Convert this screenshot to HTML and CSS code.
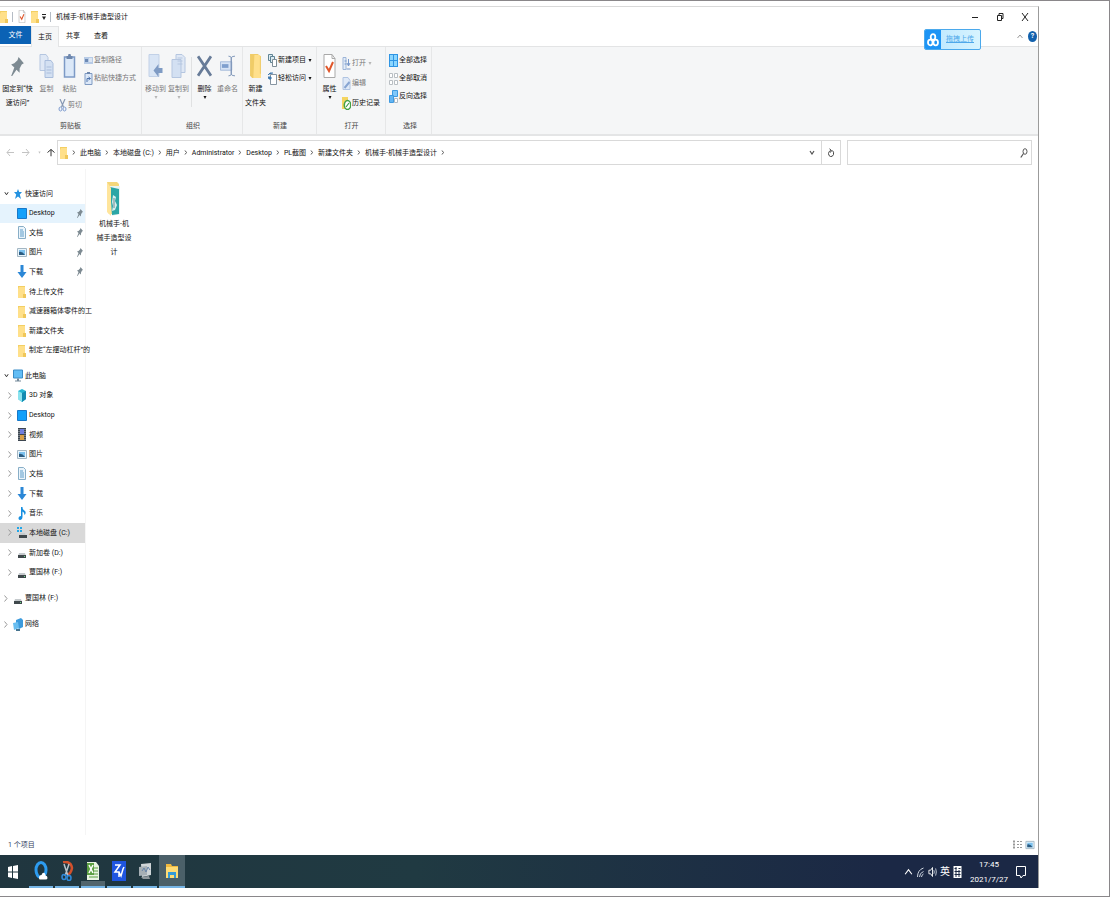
FILE: index.html
```html
<!DOCTYPE html>
<html lang="zh-CN">
<head>
  <meta charset="UTF-8" />
  <meta name="viewport" content="width=device-width, initial-scale=1.0"/>
  <title>机械手-机械手造型设计</title>
  <link rel="stylesheet" href="styles.css">
</head>
<body>
  <!-- icon sprite -->
  <svg class="sprite" aria-hidden="true">
    <symbol id="i-folder" viewBox="0 0 8 13"><path d="M0 1h7v12H0z" fill="#f3cf63"/><path d="M1 2h6v11H0V4z" fill="#ffe08a"/><path d="M5 9h3v4H5z" fill="#f0c75a"/></symbol>
    <symbol id="i-check" viewBox="0 0 12 24"><path d="M.5.5h8l3 4v19H.5z" fill="#fff" stroke="#a9a9a9"/><path d="M8.500.5v4h3" fill="none" stroke="#a9a9a9"/><path d="M2.500 12l3 5 4-9" fill="none" stroke="#e0572b" stroke-width="2"/></symbol>
    <symbol id="i-pin" viewBox="0 0 12 18"><path d="M7 0l5 6-2 1-2 4v4l-3-3-4 6-1 0 3-8-3-3 3-1 3-3z" fill="#7d8a92"/></symbol>
    <symbol id="i-copy" viewBox="0 0 14 24"><path d="M.5.5h6l2 3v13h-8z" fill="#dfe8f5" stroke="#b5c6e0"/><path d="M5.500 6.500h6l2 3v14h-8z" fill="#d3e0f2" stroke="#a9bddc"/><path d="M7 13h5M7 16h5M7 19h5" stroke="#a9bddc"/></symbol>
    <symbol id="i-paste" viewBox="0 0 12 24"><path d="M1 3h10v20H1z" fill="#dbe8f8" stroke="#7d9ac6" stroke-width="1.500"/><path d="M3 2h1.500L5 0h2l.5 2H9v3H3z" fill="#6e87ad"/></symbol>
    <symbol id="i-path" viewBox="0 0 9 9"><path d="M0 1h9v7H0z" fill="#b7cbe6"/><path d="M1 3h3v3H1z" fill="#6c89b4"/><path d="M5 3h3M5 5h3" stroke="#fff"/></symbol>
    <symbol id="i-shortcut" viewBox="0 0 8 13"><path d="M.5 1.500h7v11h-7z" fill="#dce8f8" stroke="#7f9ac2"/><path d="M2.500 0h3v2h-3z" fill="#6e87ad"/><path d="M2.500 10V6.500h3M4 5l2 1.500L4 8" fill="none" stroke="#4f74ad"/></symbol>
    <symbol id="i-cut" viewBox="0 0 8 13"><path d="M1.500 0L5 8M6.500 0L3 8" stroke="#8798b3" fill="none" stroke-width="1.200"/><ellipse cx="2" cy="10" rx="1.500" ry="2" fill="none" stroke="#7d9bd0"/><ellipse cx="6" cy="10" rx="1.500" ry="2" fill="none" stroke="#7d9bd0"/></symbol>
    <symbol id="i-moveto" viewBox="0 0 14 24"><path d="M.5.5h10v22H.5z" fill="#d9e5f5" stroke="#c2d1e7"/><path d="M14 14v5h-4v4l-5-6.500 5-6.500v4z" fill="#7f9bc4"/></symbol>
    <symbol id="i-copyto" viewBox="0 0 14 24"><path d="M4.500.5h6l3 3v15h-9z" fill="#dfe8f5" stroke="#b5c6e0"/><path d="M.5 5.500h9v18h-9z" fill="#d3e0f2" stroke="#b5c6e0"/><path d="M6 4h5M6 7h5M6 10h5" stroke="#b5c6e0"/></symbol>
    <symbol id="i-delete" viewBox="0 0 14 20"><path d="M1 1l12 18M13 1L1 19" stroke="#677b98" stroke-width="2.500"/></symbol>
    <symbol id="i-rename" viewBox="0 0 16 22"><path d="M.5 6.500h12v9H.5z" fill="#d6e3f5" stroke="#a3b9da"/><path d="M2 9h7v4H2z" fill="#7f9fce"/><path d="M9 .5q3 0 3 2v17q0 2-3 2M16 .5q-4 0-4 2v17q0 2 4 2" fill="none" stroke="#7d94b8"/></symbol>
    <symbol id="i-bigfolder" viewBox="0 0 12 22"><path d="M1 0h7l3 2v20H3L1 20z" fill="#f0cc68"/><path d="M5 1h5v17h1v4H4z" fill="#ffe08c"/></symbol>
    <symbol id="i-newitem" viewBox="0 0 9 13"><path d="M.5.5h4v6h-4z" fill="#dcebf2" stroke="#5f8494"/><path d="M2.500 2.500h4v6h-4z" fill="#dcebf2" stroke="#5f8494"/><path d="M4.500 5.500h4v7h-4z" fill="#fff" stroke="#7e8d96"/></symbol>
    <symbol id="i-access" viewBox="0 0 9 13"><path d="M2.500 2.500h6v10h-6z" fill="#fff" stroke="#8795a1"/><path d="M0 3l2-2h3M0 5h3v2H1z" stroke="#3e79ad" fill="#3e79ad"/></symbol>
    <symbol id="i-open" viewBox="0 0 8 13"><path d="M.5.5h3v12h-3z" fill="#e4edf8" stroke="#9db5d8"/><path d="M2 4h2M2 7h2" stroke="#7898cb"/><path d="M6 2v7M4.500 6L6 9l1.500-3M4 12h4" fill="none" stroke="#7898cb"/></symbol>
    <symbol id="i-edit" viewBox="0 0 8 13"><path d="M.5.5h5l2 3v9h-7z" fill="#dfe9f7" stroke="#b0c4e2"/><path d="M2 11l5-6" stroke="#88a5d2" stroke-width="2"/></symbol>
    <symbol id="i-history" viewBox="0 0 9 13"><path d="M0 0h6v12H0z" fill="#f5d561"/><ellipse cx="5.500" cy="8" rx="3.200" ry="4.500" fill="#fff" stroke="#43a047" stroke-width="1.500"/><path d="M4 10l3-4" stroke="#43a047" stroke-width="1.200"/></symbol>
    <symbol id="i-all" viewBox="0 0 9 13"><path d="M0 0h9v13H0z" fill="#2f95e4"/><path d="M1 1h3v5H1zM5 1h3v5H5zM1 7h3v5H1zM5 7h3v5H5z" fill="#8bd6ff"/></symbol>
    <symbol id="i-none" viewBox="0 0 9 13"><path d="M.5 1.500h3v4h-3zM5.500 1.500h3v4h-3zM.5 8.500h3v4h-3zM5.500 8.500h3v4h-3z" fill="#fff" stroke="#b9bec3"/></symbol>
    <symbol id="i-invert" viewBox="0 0 9 13"><path d="M3.500.5h5v6h-5z" fill="#7fc8fa" stroke="#3f9ae0"/><path d="M.5 5.500h4v7h-4z" fill="#62b5f3" stroke="#3f9ae0"/><path d="M5.500 8.500h3v4h-3z" fill="#fff" stroke="#b0bac4"/></symbol>
    <symbol id="i-star" viewBox="0 0 10 13"><path d="M5 2l1.200 3H9L6.800 7.500 8 12 5 9.500 2 12l1.200-4.500L1 5h2.800z" fill="#2492e0"/></symbol>
    <symbol id="i-desktop" viewBox="0 0 10 11"><path d="M.5.5h9v10h-9z" fill="#12a0fa" stroke="#1878c8"/></symbol>
    <symbol id="i-doc" viewBox="0 0 10 13"><path d="M1.500.5h5l2 2v10h-7z" fill="#eaf4fb" stroke="#88aec7"/><path d="M3 4h3M3 6h4M3 8h4M3 10h4" stroke="#5c9cc9"/></symbol>
    <symbol id="i-pic" viewBox="0 0 10 11"><path d="M.5 1.500h9v8h-9z" fill="#e8f4fb" stroke="#a3b6c3"/><path d="M2 3h6v5H2z" fill="#7cc1ee"/><path d="M2 5q3-1 6 3H2z" fill="#2b5b80"/></symbol>
    <symbol id="i-down" viewBox="0 0 10 13"><path d="M3.500 0h3v7H9.500L5 13 .5 7h3z" fill="#2b87d6"/></symbol>
    <symbol id="i-pc" viewBox="0 0 10 12"><path d="M.5.5h9v8h-9z" fill="#62bdf5" stroke="#3a8cc6"/><path d="M4 9h2v2H4zM2 11h6v1H2z" fill="#74899a"/></symbol>
    <symbol id="i-3d" viewBox="0 0 10 13"><path d="M1 2l4-2 4 2v8l-4 3-4-3z" fill="#24b6d2"/><path d="M1 2l4 2v9l-4-3z" fill="#8be3ee"/><path d="M5 4l4-2v8l-4 3z" fill="#138bb0"/></symbol>
    <symbol id="i-video" viewBox="0 0 10 13"><path d="M1 0h8v13H1z" fill="#3d4650"/><path d="M3 1h4v5H3z" fill="#6f7ee0"/><path d="M3 7h4v5H3z" fill="#d8a048"/><path d="M2 1v11M8 1v11" stroke="#aeb6bd" stroke-dasharray="1 1"/></symbol>
    <symbol id="i-music" viewBox="0 0 10 13"><path d="M4 0h1.500q0 3 2.500 4 1.500 2-.5 4 0-3-2-3.500V10q0 2.500-2 3-2 0-2-1.500Q1.500 9 4 9z" fill="#178fe0"/></symbol>
    <symbol id="i-drive" viewBox="0 0 10 13"><path d="M2 7h6l1 3H1z" fill="#c5cacd"/><path d="M1 9h8v3H1z" fill="#40484c"/><path d="M7 10h1v1H7z" fill="#6fe08c"/></symbol>
    <symbol id="i-cdrive" viewBox="0 0 10 13"><path d="M0 1h2v2H0zM3 1h2v2H3zM0 4h2v2H0zM3 4h2v2H3z" fill="#22a7e8"/><path d="M3 7h5l1 3H2z" fill="#c5cacd"/><path d="M2 9h8v3H2z" fill="#40484c"/></symbol>
    <symbol id="i-net" viewBox="0 0 10 13"><path d="M3 2l5-2 2 2v7l-4 2-3-3z" fill="#3d9bdd"/><path d="M0 5l5-1 1 6-5 2z" fill="#68bdf0"/><path d="M3 11h4v2H3z" fill="#47748f"/></symbol>
    <symbol id="i-right" viewBox="0 0 4 7"><path d="M1 1.500l1.500 2L1 5.500" fill="none" stroke="currentColor"/></symbol>
    <symbol id="i-expand" viewBox="0 0 4 7"><path d="M.5.5l2.500 3-2.500 3" fill="none" stroke="currentColor"/></symbol>
    <symbol id="i-chevdown" viewBox="0 0 6 5"><path d="M1 1l2 3 2-3" fill="none" stroke="currentColor" stroke-width="1.200"/></symbol>
    <symbol id="i-caret" viewBox="0 0 4 3"><path d="M.5 0h3L2 3z" fill="currentColor"/></symbol>
    <symbol id="i-arrow" viewBox="0 0 8 9"><path d="M8 4.500H1M4 1L1 4.500 4 8" fill="none" stroke="currentColor"/></symbol>
  </svg>

  <div class="frame">
    <div class="window">
      <header class="titlebar">
        <svg class="icon-folder"><use href="#i-folder"/></svg>
        <span class="bar"></span>
        <svg class="icon-check-sm"><use href="#i-check"/></svg>
        <svg class="icon-folder"><use href="#i-folder"/></svg>
        <button class="quick-menu" aria-label="自定义快速访问工具栏"><svg viewBox="0 0 4 6"><path d="M0 .5h4" stroke="#222"/><path d="M0 2.500h4L2 6z" fill="#222"/></svg></button>
        <span class="bar"></span>
        <h1>机械手-机械手造型设计</h1>
        <div class="window-buttons">
          <button aria-label="最小化"><svg viewBox="0 0 10 10"><path d="M2 5.500h6" stroke="#222"/></svg></button>
          <button aria-label="还原"><svg viewBox="0 0 10 10"><path d="M2.500 3.500h4v5h-4zM4 3V1.500h4v5H7" fill="none" stroke="#222"/></svg></button>
          <button aria-label="关闭"><svg viewBox="0 0 10 10"><path d="M2 1l6 8M8 1L2 9" stroke="#222"/></svg></button>
        </div>
      </header>

      <nav class="tabs">
        <button class="file">文件</button>
        <button class="active">主页</button>
        <button>共享</button>
        <button>查看</button>
        <div class="help">
          <svg class="collapse" viewBox="0 0 6 5"><path d="M.5 4L3 1l2.500 3" fill="none" stroke="#999"/></svg>
          <button aria-label="帮助">?</button>
        </div>
      </nav>
      <button class="upload">
        <span class="upload-logo"><svg viewBox="0 0 12 14"><g fill="none" stroke="#fff" stroke-width="1.800"><ellipse cx="6" cy="4" rx="2.300" ry="2.800"/><ellipse cx="3.300" cy="9.500" rx="2.300" ry="2.800"/><ellipse cx="8.700" cy="9.500" rx="2.300" ry="2.800"/></g></svg></span>
        <span class="upload-text">拖拽上传</span>
      </button>

      <section class="ribbon">
        <div class="group clipboard">
          <div class="tools">
            <button class="big pin"><svg><use href="#i-pin"/></svg>固定到“快<br>速访问”</button>
            <button class="big off"><svg><use href="#i-copy"/></svg>复制</button>
            <div class="column">
              <button class="big off"><svg><use href="#i-paste"/></svg>粘贴</button>
              <button class="small off"><svg><use href="#i-cut"/></svg>剪切</button>
            </div>
            <div class="column">
              <button class="small off"><svg><use href="#i-path"/></svg>复制路径</button>
              <button class="small off"><svg><use href="#i-shortcut"/></svg>粘贴快捷方式</button>
            </div>
          </div>
          <h2>剪贴板</h2>
        </div>
        <div class="group organize">
          <div class="tools">
            <button class="big off"><svg><use href="#i-moveto"/></svg>移动到<svg class="caret"><use href="#i-caret"/></svg></button>
            <button class="big off"><svg><use href="#i-copyto"/></svg>复制到<svg class="caret"><use href="#i-caret"/></svg></button>
            <span class="divider"></span>
            <button class="big"><svg><use href="#i-delete"/></svg>删除<svg class="caret"><use href="#i-caret"/></svg></button>
            <button class="big off"><svg><use href="#i-rename"/></svg>重命名</button>
          </div>
          <h2>组织</h2>
        </div>
        <div class="group new">
          <div class="tools">
            <button class="big"><svg><use href="#i-bigfolder"/></svg>新建<br>文件夹</button>
            <div class="column">
              <button class="small"><svg><use href="#i-newitem"/></svg>新建项目<svg class="caret"><use href="#i-caret"/></svg></button>
              <button class="small"><svg><use href="#i-access"/></svg>轻松访问<svg class="caret"><use href="#i-caret"/></svg></button>
            </div>
          </div>
          <h2>新建</h2>
        </div>
        <div class="group open">
          <div class="tools">
            <button class="big"><svg><use href="#i-check"/></svg>属性<svg class="caret"><use href="#i-caret"/></svg></button>
            <div class="column">
              <button class="small off"><svg><use href="#i-open"/></svg>打开<svg class="caret"><use href="#i-caret"/></svg></button>
              <button class="small off"><svg><use href="#i-edit"/></svg>编辑</button>
              <button class="small"><svg><use href="#i-history"/></svg>历史记录</button>
            </div>
          </div>
          <h2>打开</h2>
        </div>
        <div class="group select">
          <div class="tools">
            <div class="column">
              <button class="small"><svg><use href="#i-all"/></svg>全部选择</button>
              <button class="small"><svg><use href="#i-none"/></svg>全部取消</button>
              <button class="small"><svg><use href="#i-invert"/></svg>反向选择</button>
            </div>
          </div>
          <h2>选择</h2>
        </div>
      </section>

      <div class="address-row">
        <div class="history">
          <button aria-label="后退"><svg><use href="#i-arrow"/></svg></button>
          <button class="forward" aria-label="前进"><svg><use href="#i-arrow"/></svg></button>
          <button class="recent" aria-label="最近浏览的位置"><svg><use href="#i-caret"/></svg></button>
          <button class="up" aria-label="上移"><svg><use href="#i-arrow"/></svg></button>
        </div>
        <div class="address">
          <svg class="icon-folder"><use href="#i-folder"/></svg>
          <svg class="sep"><use href="#i-right"/></svg>
          <a href="#">此电脑</a><svg class="sep"><use href="#i-right"/></svg>
          <a href="#">本地磁盘 (C:)</a><svg class="sep"><use href="#i-right"/></svg>
          <a href="#">用户</a><svg class="sep"><use href="#i-right"/></svg>
          <a href="#">Administrator</a><svg class="sep"><use href="#i-right"/></svg>
          <a href="#">Desktop</a><svg class="sep"><use href="#i-right"/></svg>
          <a href="#">PL截图</a><svg class="sep"><use href="#i-right"/></svg>
          <a href="#">新建文件夹</a><svg class="sep"><use href="#i-right"/></svg>
          <a href="#">机械手-机械手造型设计</a><svg class="sep"><use href="#i-right"/></svg>
          <button class="drop" aria-label="历史"><svg><use href="#i-chevdown"/></svg></button>
          <button class="refresh" aria-label="刷新"><svg viewBox="0 0 8 10"><path d="M5.500 2.500Q7 4 6.500 6.500 5.500 9 3.500 8.500 1.500 8 1.500 5.500 1.700 3 4 2.500M2.500.8L4.500 2.500 3.500 4.500" fill="none" stroke="#444"/></svg></button>
        </div>
        <label class="search">
          <input type="text" aria-label="搜索">
          <svg viewBox="0 0 8 10"><ellipse cx="5" cy="3.500" rx="2" ry="2.800" fill="none" stroke="#555"/><path d="M3.500 5.500L.8 9.500" stroke="#555" stroke-width="1.200"/></svg>
        </label>
      </div>

      <main class="content">
        <nav class="sidebar">
          <ul class="tree quick">
            <li class="root"><svg class="chev open"><use href="#i-chevdown"/></svg><svg><use href="#i-star"/></svg><a href="#">快速访问</a></li>
            <li class="hover"><svg><use href="#i-desktop"/></svg><a href="#">Desktop</a><svg class="pinned"><use href="#i-pin"/></svg></li>
            <li><svg><use href="#i-doc"/></svg><a href="#">文档</a><svg class="pinned"><use href="#i-pin"/></svg></li>
            <li><svg><use href="#i-pic"/></svg><a href="#">图片</a><svg class="pinned"><use href="#i-pin"/></svg></li>
            <li><svg><use href="#i-down"/></svg><a href="#">下载</a><svg class="pinned"><use href="#i-pin"/></svg></li>
            <li><svg><use href="#i-folder"/></svg><a href="#">待上传文件</a></li>
            <li><svg><use href="#i-folder"/></svg><a href="#">减速器箱体零件的工</a></li>
            <li><svg><use href="#i-folder"/></svg><a href="#">新建文件夹</a></li>
            <li><svg><use href="#i-folder"/></svg><a href="#">制定“左摆动杠杆”的</a></li>
          </ul>
          <ul class="tree computer">
            <li class="root"><svg class="chev open"><use href="#i-chevdown"/></svg><svg><use href="#i-pc"/></svg><a href="#">此电脑</a></li>
            <li><svg class="chev"><use href="#i-expand"/></svg><svg><use href="#i-3d"/></svg><a href="#">3D 对象</a></li>
            <li><svg class="chev"><use href="#i-expand"/></svg><svg><use href="#i-desktop"/></svg><a href="#">Desktop</a></li>
            <li><svg class="chev"><use href="#i-expand"/></svg><svg><use href="#i-video"/></svg><a href="#">视频</a></li>
            <li><svg class="chev"><use href="#i-expand"/></svg><svg><use href="#i-pic"/></svg><a href="#">图片</a></li>
            <li><svg class="chev"><use href="#i-expand"/></svg><svg><use href="#i-doc"/></svg><a href="#">文档</a></li>
            <li><svg class="chev"><use href="#i-expand"/></svg><svg><use href="#i-down"/></svg><a href="#">下载</a></li>
            <li><svg class="chev"><use href="#i-expand"/></svg><svg><use href="#i-music"/></svg><a href="#">音乐</a></li>
            <li class="current"><svg class="chev"><use href="#i-expand"/></svg><svg><use href="#i-cdrive"/></svg><a href="#">本地磁盘 (C:)</a></li>
            <li><svg class="chev"><use href="#i-expand"/></svg><svg><use href="#i-drive"/></svg><a href="#">新加卷 (D:)</a></li>
            <li><svg class="chev"><use href="#i-expand"/></svg><svg><use href="#i-drive"/></svg><a href="#">覃国林 (F:)</a></li>
          </ul>
          <ul class="tree">
            <li class="root"><svg class="chev"><use href="#i-expand"/></svg><svg><use href="#i-drive"/></svg><a href="#">覃国林 (F:)</a></li>
          </ul>
          <ul class="tree">
            <li class="root"><svg class="chev"><use href="#i-expand"/></svg><svg><use href="#i-net"/></svg><a href="#">网络</a></li>
          </ul>
        </nav>
        <div class="files">
          <a class="file-item" href="#">
            <svg viewBox="0 0 16 36"><path d="M1 1h10l2 2v30H3L1 30z" fill="#f5d77b"/><path d="M4 5h10v28l-8 2z" fill="#e9f5f4"/><path d="M4 6l9 2v25l-7 1z" fill="#2ba6a6"/><path d="M7 14l3 2-1 4 2 4-2 5-3 1 1-5-1-4z" fill="#d7eeee"/><path d="M8 17v10" stroke="#6b8b90"/><path d="M1 1l4 6v28l-4-4z" fill="#ffe59c"/></svg>
            <span>机械手-机械手造型设计</span>
          </a>
        </div>
      </main>

      <div class="statusbar">
        <span>1 个项目</span>
        <div class="views">
          <button aria-label="详细信息"><svg viewBox="0 0 10 10"><path d="M0 1.500h3M0 4.500h3M0 7.500h3" stroke="#999" stroke-width="2" stroke-dasharray="2 1"/><path d="M4 1.500h5M4 4.500h5M4 7.500h5" stroke="#999" stroke-dasharray="2 1"/></svg></button>
          <button aria-label="大图标"><svg><use href="#i-pic"/></svg></button>
        </div>
      </div>

      <footer class="taskbar">
        <button class="start" aria-label="开始"><svg viewBox="0 0 10 14"><path d="M0 2l4-1v5.500H0zM5 1l5-1v6.500H5zM0 7.500h4V13l-4-1zM5 7.500h5V14l-5-1z" fill="#fff"/></svg></button>
        <button class="running" aria-label="QQ浏览器"><svg viewBox="0 0 14 20"><ellipse cx="7" cy="9" rx="5" ry="7.500" fill="none" stroke="#2d9cf0" stroke-width="3"/><path d="M5 17q0-3 2.500-3 1-3 3-2 1 1 1 2.500 2 0 2 2.500 0 1.500-2 1.500H6q-1 0-1-1.500z" fill="#fff"/></svg></button>
        <button class="running" aria-label="截图工具"><svg viewBox="0 0 14 20"><path d="M3 1q8-1 9 6-1 6-5 7" fill="none" stroke="#d2512c" stroke-width="2.500"/><path d="M4 3l4 12M9 3L5 15" stroke="#b9c3ca" stroke-width="1.500"/><ellipse cx="4" cy="16" rx="2" ry="2.500" fill="none" stroke="#3089d8" stroke-width="1.500"/><ellipse cx="9" cy="17" rx="2" ry="2.500" fill="none" stroke="#3089d8" stroke-width="1.500"/></svg></button>
        <button class="running lit" aria-label="表格"><svg viewBox="0 0 14 20"><path d="M1 1h9l3 4v14H1z" fill="#e9f4e2"/><path d="M1 2h7v12H1z" fill="#5b9f42"/><path d="M3 4l4 8M7 4l-4 8" stroke="#fff" stroke-width="1.500"/><path d="M8 7h4M8 10h4M8 13h4M3 16h9" stroke="#5b9f42"/></svg></button>
        <button class="running" aria-label="中望"><svg viewBox="0 0 14 20"><path d="M0 0h14v20H0z" fill="#1f55e0"/><path d="M3 4h5L3 11h4v5M7 11l2 4 2-7 1-2" fill="none" stroke="#fff" stroke-width="1.500"/></svg></button>
        <button class="running" aria-label="监视器"><svg viewBox="0 0 14 20"><path d="M3 3l10-1v12l-9 2z" fill="#cfd5d8"/><path d="M1 6l8-1v9l-8 1z" fill="#a6afb5"/><path d="M4 10l2-3 2 4 2-5 2 3" fill="none" stroke="#6683a8"/><path d="M3 16l8-1 1 3H5z" fill="#8f989d"/></svg></button>
        <button class="running focused" aria-label="文件资源管理器"><svg viewBox="0 0 14 20"><path d="M1 3h5l1 2h6v12H1z" fill="#f0b93e"/><path d="M1 6h12v11H1z" fill="#ffdc74"/><path d="M3 17v-6h8v6H9v-3H5v3z" fill="#359bd6"/></svg></button>
        <div class="tray">
          <svg viewBox="0 0 8 8"><path d="M1 6l3-4 3 4" fill="none" stroke="#fff"/></svg>
          <svg viewBox="0 0 8 12"><path d="M1 11Q1 4 7 2M3 11q0-4 4-5.500M5 11q0-2 2-3" fill="none" stroke="#cdd4df"/></svg>
          <svg viewBox="0 0 10 12"><path d="M1 4h2l2-3v10L3 8H1z" fill="none" stroke="#fff"/><path d="M6.500 4q1 2 0 4M8.500 2q1.500 4 0 8" fill="none" stroke="#cdd4df"/></svg>
          <span class="ime">英</span>
          <svg viewBox="0 0 8 12"><path d="M0 0h8v12H0z" fill="#fff"/><path d="M1 2.500h2M1 5.500h6M1 8.500h6M2.500 1v10M5.500 4v7M5 2.500h2" stroke="#1b2845" fill="none"/></svg>
          <time>17:45<br>2021/7/27</time>
          <svg class="notice" viewBox="0 0 10 14"><path d="M.5 1.500h9v9H7L5 13l-1-2.500H.5z" fill="none" stroke="#fff"/></svg>
        </div>
      </footer>
    </div>
  </div>
</body>
</html>
```
FILE: styles.css
```css
* {
  box-sizing: border-box;
}

body {
  margin: 0;
  font-family: Roboto, "Noto Sans CJK SC", sans-serif;
  font-size: 7px;
  line-height: 14px;
  color: #111;
  background-color: #fff;
}

button {
  border: none;
  padding: 0;
  background: none;
  font: inherit;
  color: inherit;
  white-space: nowrap;
  cursor: pointer;
}

a {
  color: inherit;
  text-decoration: none;
}

svg {
  display: block;
  flex: none;
}

h1,
h2,
ul {
  margin: 0;
  padding: 0;
  font-size: 7px;
  font-weight: normal;
}

.sprite {
  position: absolute;
  width: 0;
  height: 0;
}

.frame {
  min-height: 100vh;
  display: flex;
  padding: 5px 70px 8px 0;
  border: 1px solid #8a878a;
  border-left: none;
}

.window {
  position: relative;
  flex: 1;
  min-width: 0;
  display: flex;
  flex-direction: column;
  border-top: 1px solid #d9d9d9;
  border-right: 1px solid #9b9b9b;
}

.icon-folder {
  width: 8px;
  height: 13px;
}

/* title bar */
.titlebar {
  display: flex;
  align-items: center;
  height: 19px;
}

.titlebar .bar {
  width: 1px;
  height: 10px;
  margin: 0 5px 0 4px;
  background-color: #b5bcc5;
}

.icon-check-sm {
  width: 8px;
  height: 13px;
  margin-right: 5px;
}

.quick-menu {
  margin-left: 3px;
}

.quick-menu svg {
  width: 4px;
  height: 6px;
}

.titlebar h1 {
  white-space: nowrap;
}

.window-buttons {
  display: flex;
  margin-left: auto;
  padding-right: 1px;
}

.window-buttons button {
  width: 25px;
  display: flex;
  justify-content: center;
}

.window-buttons svg {
  width: 10px;
  height: 10px;
}

/* tabs */
.tabs {
  display: flex;
  height: 21px;
  border-bottom: 1px solid #e3e4e5;
}

.tabs > button {
  width: 28px;
  height: 20px;
}

.tabs .file {
  width: 31px;
  height: 18px;
  color: #fff;
  background-color: #0b62b5;
}

.tabs .active {
  height: 21px;
  border: 1px solid #e3e4e5;
  border-bottom: none;
  background-color: #f5f6f7;
}

.help {
  display: flex;
  align-items: center;
  gap: 5px;
  margin-left: auto;
  padding-right: 1px;
}

.collapse {
  width: 6px;
  height: 5px;
}

.help button {
  width: 9px;
  height: 11px;
  border-radius: 50%;
  color: #fff;
  font-weight: bold;
  line-height: 11px;
  background-color: #1261ad;
}

/* floats over the tab row */
.upload {
  position: absolute;
  top: 22px;
  right: 57px;
  display: flex;
  height: 21px;
  border: 1px solid #4ba9ec;
  border-radius: 2px;
  overflow: hidden;
  color: #4ea8ea;
  background: linear-gradient(to right, #b9e5ff, #d7f4ff);
}

.upload-logo {
  display: flex;
  align-items: center;
  justify-content: center;
  width: 16px;
  height: 19px;
  background-color: #1d94f5;
}

.upload-logo svg {
  width: 12px;
  height: 14px;
}

.upload-text {
  padding: 0 6px 0 5px;
  line-height: 19px;
  text-decoration: underline;
}

/* ribbon */
.ribbon {
  display: flex;
  height: 89px;
  border-bottom: 2px solid #e4e5e6;
  background-color: #f5f6f7;
}

.group {
  display: flex;
  flex-direction: column;
  padding: 4px 0 1px;
  border-right: 1px solid #e6e7e8;
}

.group h2 {
  margin-top: auto;
  text-align: center;
  color: #444;
}

.tools {
  display: flex;
}

.clipboard {
  width: 142px;
}

.organize {
  width: 101px;
  padding-left: 2px;
}

.new {
  width: 74px;
  padding-left: 1px;
}

.open {
  width: 69px;
  padding-left: 1px;
}

.select {
  width: 46px;
  padding-left: 3px;
}

.big {
  display: flex;
  flex-direction: column;
  align-items: center;
  width: 23px;
  padding-top: 3px;
}

.big svg {
  width: 15px;
  height: 24px;
  margin-bottom: 4px;
}

.big.pin {
  width: 35px;
}

.big.pin svg {
  padding: 3px 0 2px;
}

.big .caret,
.small .caret {
  width: 4px;
  height: 3px;
  margin: 0;
}

.off {
  color: #777;
}

.off .caret {
  color: #b5b5b5;
}

.column {
  display: flex;
  flex-direction: column;
  align-items: flex-start;
}

.clipboard .column + .column {
  padding-left: 2px;
}

.new .column,
.open .column {
  padding-left: 1px;
}

.small {
  display: flex;
  align-items: center;
  gap: 1px;
  height: 18px;
}

.small svg {
  width: 9px;
  height: 13px;
}

.small .caret {
  margin-left: 1px;
}

.open .column {
  padding-top: 2px;
}

.open .small {
  height: 20px;
}

.divider {
  width: 1px;
  height: 50px;
  margin: 6px 1px 0;
  background-color: #e0e1e2;
}

/* address bar */
.address-row {
  display: flex;
  gap: 6px;
  padding: 4px 6px;
}

.history {
  display: flex;
  align-items: center;
  gap: 8px;
  width: 45px;
  color: #c3c3c3;
}

.history svg {
  width: 8px;
  height: 9px;
}

.history .forward svg {
  transform: rotate(180deg);
}

.history .recent svg {
  width: 3px;
  height: 3px;
}

.history .up {
  margin-left: -2px;
  color: #333;
}

.history .up svg {
  transform: rotate(90deg);
}

.address {
  flex: 1;
  display: flex;
  align-items: center;
  height: 25px;
  padding-left: 2px;
  border: 1px solid #d9d9d9;
}

.address a {
  white-space: nowrap;
}

.address .sep {
  width: 4px;
  height: 7px;
  margin: 0 4px;
  color: #555;
}

.address .drop {
  margin-left: auto;
  padding: 0 6px;
  color: #555;
}

.drop svg {
  width: 6px;
  height: 5px;
}

.refresh {
  display: flex;
  align-items: center;
  height: 23px;
  padding: 0 5px;
  border-left: 1px solid #d9d9d9;
}

.refresh svg {
  width: 8px;
  height: 10px;
}

.search {
  display: flex;
  align-items: center;
  width: 18%;
  height: 25px;
  padding-right: 3px;
  border: 1px solid #d9d9d9;
}

.search input {
  flex: 1;
  min-width: 0;
  border: none;
  outline: none;
  font: inherit;
}

.search svg {
  width: 8px;
  height: 10px;
}

/* folder tree and files */
.content {
  flex: 1;
  display: flex;
}

.sidebar {
  width: 86px;
  padding-top: 15px;
  border-right: 1px solid #f5f5f5;
}

.tree {
  display: grid;
  grid-template-columns: minmax(0, 1fr);
  grid-auto-rows: 1fr;
  margin-bottom: 6px;
  list-style: none;
}

.tree.quick {
  height: 176px;
}

.tree.computer {
  height: 216px;
}

.tree li {
  display: flex;
  align-items: center;
  gap: 2px;
  min-height: 20px;
  padding-left: 17px;
  white-space: nowrap;
}

.tree.quick li,
.tree.computer li {
  min-height: 0;
}

.tree li.root {
  padding-left: 13px;
}

.tree svg {
  width: 10px;
  height: 13px;
}

.tree .chev {
  width: 6px;
  height: 7px;
  margin-left: -10px;
  margin-right: 2px;
  color: #999;
}

.tree .chev.open {
  color: #333;
}

.tree .pinned {
  width: 6px;
  height: 9px;
  margin-left: auto;
  margin-right: 2px;
}

.tree .hover {
  background-color: #e5f3fd;
}

.tree .current {
  background-color: #d9d9d9;
}

.files {
  flex: 1;
  padding: 12px 10px;
}

.file-item {
  display: flex;
  flex-direction: column;
  align-items: center;
  width: 36px;
  text-align: center;
}

.file-item svg {
  width: 16px;
  height: 36px;
}

/* status bar */
.statusbar {
  display: flex;
  align-items: center;
  justify-content: space-between;
  height: 20px;
  padding: 0 3px 0 8px;
  color: #33415e;
}

.views {
  display: flex;
  gap: 2px;
}

.views svg {
  width: 10px;
  height: 10px;
}

/* taskbar */
.taskbar {
  display: flex;
  height: 33px;
  color: #fff;
  background: linear-gradient(to right, #20363f, #203a42 40%, #1b2845 85%);
}

.taskbar button {
  display: flex;
  align-items: center;
  justify-content: center;
  width: 24px;
  margin-right: 2px;
}

.taskbar .start {
  width: 26px;
  margin-right: 3px;
}

.taskbar .start svg {
  width: 10px;
  height: 14px;
}

.taskbar .running {
  border-bottom: 2px solid #76b5e6;
}

.running svg {
  width: 14px;
  height: 20px;
}

.taskbar .lit {
  background: linear-gradient(transparent 85%, #52656d 85%) no-repeat;
}

.taskbar .focused {
  width: 26px;
  background-color: #4b6069;
}

.tray {
  display: flex;
  align-items: center;
  gap: 3px;
  margin-left: auto;
  padding-right: 12px;
}

.tray svg {
  width: 9px;
  height: 12px;
}

.ime {
  font-size: 10px;
}

.tray time {
  margin: 0 5px;
  font-size: 8px;
  line-height: 15px;
  text-align: center;
}

.tray .notice {
  width: 10px;
  height: 14px;
}
```
